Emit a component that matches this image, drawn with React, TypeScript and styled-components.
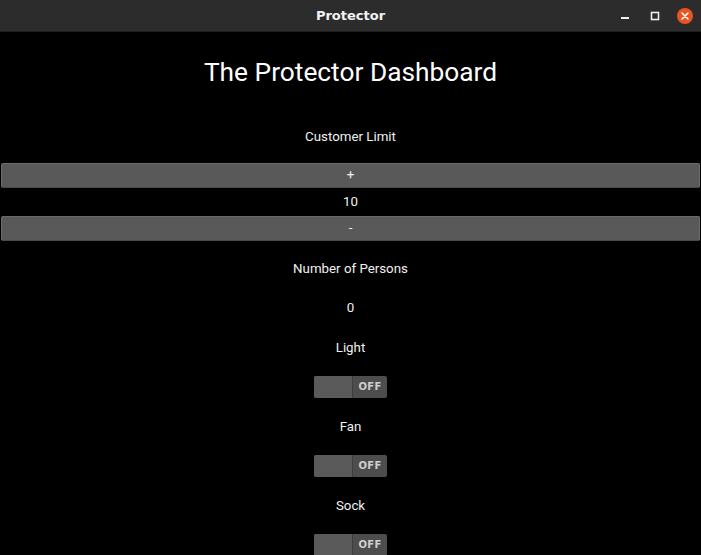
import styled, { createGlobalStyle } from "styled-components";

const Global = createGlobalStyle`
  html, body {
    margin: 0;
    padding: 0;
    background: #000;
  }
  body {
    font-family: Roboto, "Noto Sans", sans-serif;
    color: #fff;
  }
`;

const Window = styled.div`
  width: 701px;
  height: 555px;
  overflow: hidden;
  display: flex;
  flex-direction: column;
  background: #000;
`;

const TitleBar = styled.div`
  height: 32px;
  flex: none;
  background: #2c2c2c;
  display: grid;
  grid-template-columns: 1fr auto 1fr;
  align-items: center;
  border-bottom: 1px solid #1e1e1e;
  box-sizing: border-box;
`;

const WindowTitle = styled.div`
  grid-column: 2;
  font-family: "DejaVu Sans", sans-serif;
  font-weight: bold;
  font-size: 13px;
  color: #f2f2f2;
`;

const Controls = styled.div`
  grid-column: 3;
  justify-self: end;
  display: flex;
  align-items: center;
  gap: 14px;
  padding-right: 8px;
`;

const CtrlButton = styled.div`
  width: 16px;
  height: 16px;
  display: flex;
  align-items: center;
  justify-content: center;
`;

const CloseButton = styled(CtrlButton)`
  border-radius: 50%;
  background: #e95420;
`;

const Content = styled.main`
  display: flex;
  flex-direction: column;
  align-items: center;
  padding-top: 24px;
`;

const Heading = styled.h1`
  margin: 0;
  font-size: 26.3px;
  font-weight: 400;
  line-height: 32px;
  color: #fff;
`;

const Label = styled.div<{ $top?: number; $bottom?: number }>`
  margin-top: ${(p) => p.$top ?? 0}px;
  margin-bottom: ${(p) => p.$bottom ?? 0}px;
  height: 39.5px;
  display: flex;
  align-items: center;
  font-size: 13.3px;
  color: #f0f0f0;
`;

const WideButton = styled.button`
  align-self: stretch;
  margin: 0 1px;
  height: 25px;
  box-sizing: border-box;
  background: #595959;
  border: 1px solid #6b6b6b;
  border-bottom-color: #4a4a4a;
  border-radius: 2px;
  color: #f2f2f2;
  font-family: Roboto, sans-serif;
  font-size: 13.3px;
  padding: 0;
  line-height: 22px;
`;

const Value = styled.div`
  height: 28px;
  display: flex;
  align-items: center;
  font-size: 13.3px;
  color: #f0f0f0;
`;

const SwitchRow = styled.div`
  height: 39.5px;
  display: flex;
  align-items: center;
`;

const Switch = styled.div`
  width: 73px;
  height: 22px;
  display: flex;
  border-radius: 2px;
  overflow: hidden;
  background: #4d4d4d;
`;

const Thumb = styled.div`
  width: 38px;
  background: #5a5a5a;
  border-right: 1px solid #3e3e3e;
`;

const SwitchText = styled.div`
  flex: 1;
  display: flex;
  align-items: center;
  justify-content: center;
  font-family: "DejaVu Sans", sans-serif;
  font-weight: bold;
  font-size: 10px;
  color: #cfcfcf;
  letter-spacing: 0.3px;
`;

function Toggle() {
  return (
    <SwitchRow>
      <Switch>
        <Thumb />
        <SwitchText>OFF</SwitchText>
      </Switch>
    </SwitchRow>
  );
}

export default function App() {
  return (
    <>
      <Global />
      <Window>
        <TitleBar>
          <WindowTitle>Protector</WindowTitle>
          <Controls>
            <CtrlButton>
              <svg width="10" height="10" viewBox="0 0 10 10">
                <rect x="1" y="6" width="8" height="2" fill="#eee" />
              </svg>
            </CtrlButton>
            <CtrlButton>
              <svg width="10" height="10" viewBox="0 0 10 10">
                <rect x="1.5" y="1.5" width="7" height="7" fill="none" stroke="#eee" strokeWidth="1.6" />
              </svg>
            </CtrlButton>
            <CloseButton>
              <svg width="8" height="8" viewBox="0 0 8 8">
                <path d="M1 1L7 7M7 1L1 7" stroke="#fff" strokeWidth="1.6" strokeLinecap="round" />
              </svg>
            </CloseButton>
          </Controls>
        </TitleBar>
        <Content>
          <Heading>The Protector Dashboard</Heading>
          <Label $top={29} $bottom={6}>Customer Limit</Label>
          <WideButton>+</WideButton>
          <Value>10</Value>
          <WideButton>-</WideButton>
          <Label $top={8}>Number of Persons</Label>
          <Label>0</Label>
          <Label>Light</Label>
          <Toggle />
          <Label>Fan</Label>
          <Toggle />
          <Label>Sock</Label>
          <Toggle />
        </Content>
      </Window>
    </>
  );
}
